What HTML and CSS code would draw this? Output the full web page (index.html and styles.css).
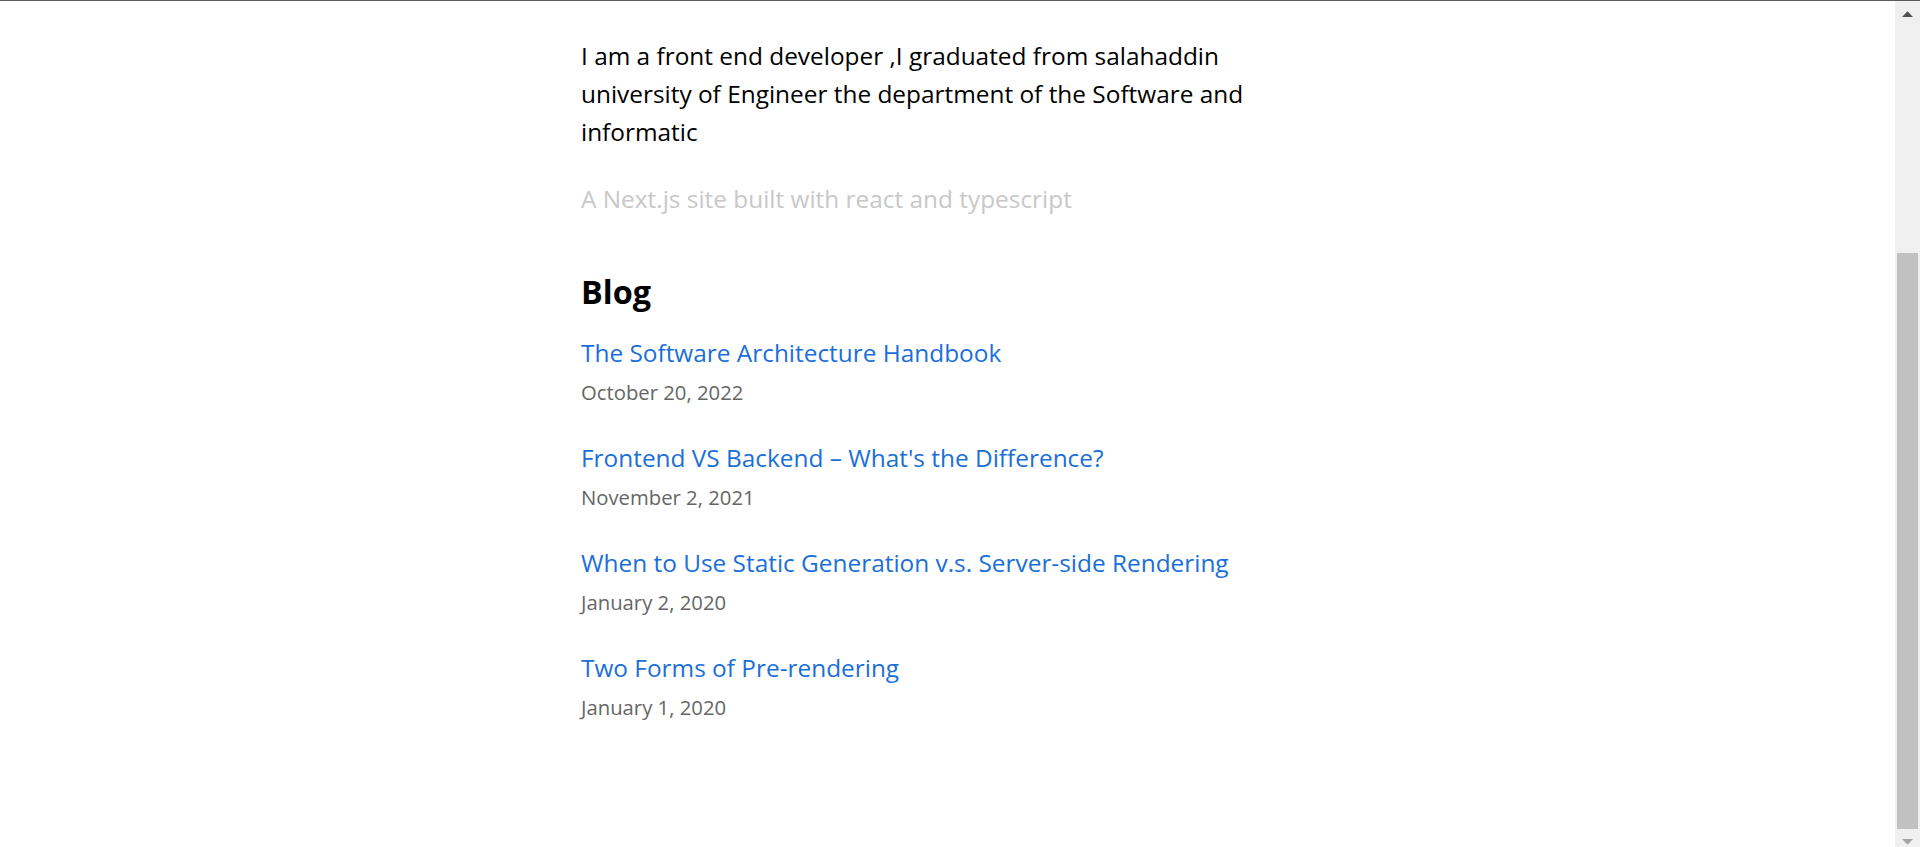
FILE: index.html
```html
<!DOCTYPE html>
<html lang="en">
<head>
<meta charset="utf-8">
<title>Home</title>
<link rel="stylesheet" href="styles.css">
</head>
<body class="window">
  <div class="frame">
    <div class="scroller" id="scroller">
      <div class="container">
        <header class="header">
          <div class="avatar" aria-hidden="true">
            <svg viewBox="0 0 180 180" width="180" height="180">
              <circle cx="90" cy="90" r="90" fill="#e5e5e5"/>
              <circle cx="90" cy="72" r="32" fill="#c9c9c9"/>
              <path d="M30 152c10-32 34-46 60-46s50 14 60 46" fill="#c9c9c9"/>
            </svg>
          </div>
        </header>
        <main>
          <section class="heading-md intro">
            <p class="bio">I am a front end developer ,I graduated from salahaddin university of Engineer the department of the Software and informatic</p>
            <p class="muted">A Next.js site built with react and typescript</p>
          </section>
          <section class="heading-md blog">
            <h2 class="heading-lg">Blog</h2>
            <ul class="list">
              <li class="list-item">
                <a class="post-link" href="#">The Software Architecture Handbook</a><br>
                <small class="light-text">October 20, 2022</small>
              </li>
              <li class="list-item">
                <a class="post-link" href="#">Frontend VS Backend – What's the Difference?</a><br>
                <small class="light-text">November 2, 2021</small>
              </li>
              <li class="list-item">
                <a class="post-link" href="#">When to Use Static Generation v.s. Server-side Rendering</a><br>
                <small class="light-text">January 2, 2020</small>
              </li>
              <li class="list-item">
                <a class="post-link" href="#">Two Forms of Pre-rendering</a><br>
                <small class="light-text">January 1, 2020</small>
              </li>
            </ul>
          </section>
        </main>
      </div>
    </div>
    <div class="scrollbar" aria-hidden="true">
      <div class="sb-button">
        <svg width="11" height="6" viewBox="0 0 11 6"><polygon points="0,6 5.5,0.3 11,6" fill="#505050"/></svg>
      </div>
      <div class="sb-track">
        <div class="sb-thumb"></div>
      </div>
      <div class="sb-button">
        <svg width="11" height="6" viewBox="0 0 11 6"><polygon points="0,0 11,0 5.5,5.7" fill="#a3a3a3"/></svg>
      </div>
    </div>
  </div>
  <script src="app.js"></script>
</body>
</html>
```
FILE: styles.css
```css
html, body {
  margin: 0;
  padding: 0;
}

.window {
  height: 847px;
  overflow: hidden;
  border-top: 1px solid #5a5a5a;
  box-sizing: border-box;
  background: #fff;
  font-family: "Open Sans", "Noto Sans", sans-serif;
  color: #000;
}

.frame {
  display: flex;
  height: 854px;
}

.scroller {
  flex: 1;
  min-width: 0;
  overflow-y: scroll;
  overflow-x: hidden;
  scrollbar-width: none;
}

.scroller::-webkit-scrollbar {
  display: none;
}

.scrollbar {
  width: 25px;
  flex: none;
  display: flex;
  flex-direction: column;
  background: #f0f0f0;
}

.sb-button {
  height: 26px;
  flex: none;
  display: flex;
  align-items: center;
  justify-content: center;
}

.sb-button svg {
  display: block;
}

.sb-track {
  flex: 1;
  display: flex;
  flex-direction: column;
  padding-top: 226px;
}

.sb-thumb {
  flex: 1;
  margin: 0 2px;
  background: #c1c1c1;
}

.container {
  max-width: 777px;
  padding: 60px 22px 101px;
  margin: 0 auto;
  box-sizing: border-box;
}

.header {
  display: flex;
  flex-direction: column;
  align-items: center;
  margin-bottom: 134.5px;
}

.avatar {
  width: 180px;
  height: 180px;
  border-radius: 50%;
  overflow: hidden;
}

.avatar svg {
  display: block;
}

.heading-md {
  font-size: 24.4px;
  line-height: 38px;
}

.intro p {
  margin: 0 0 26.5px;
}

.intro .bio {
  margin-bottom: 29.5px;
}

.muted {
  color: #c8c8c8;
}

.blog {
  padding-top: 1px;
}

.heading-lg {
  font-size: 32.4px;
  font-weight: 700;
  line-height: 45px;
  margin: 23px 0 20.5px;
}

.list {
  list-style: none;
  margin: 0;
  padding: 0;
}

.list-item {
  margin: 0 0 28px;
}

.post-link {
  color: #1a6fd8;
  text-decoration: none;
}

.light-text {
  font-size: 20.3px;
  color: #666;
}
```
FILE: app.js
```js
(function () {
  var s = document.getElementById('scroller');
  function toBottom() { s.scrollTop = s.scrollHeight; }
  toBottom();
  window.addEventListener('load', toBottom);
  if (document.fonts && document.fonts.ready) document.fonts.ready.then(toBottom);
})();
```
